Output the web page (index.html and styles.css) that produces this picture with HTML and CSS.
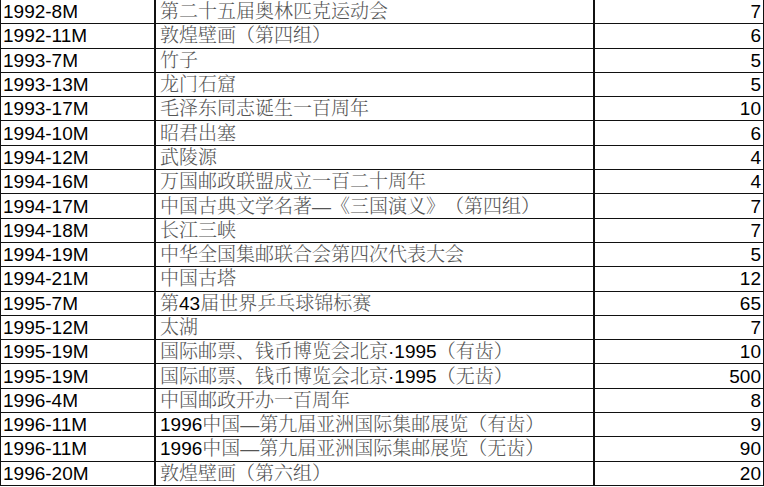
FILE: index.html
```html
<!DOCTYPE html>
<html lang="zh">
<head>
<meta charset="utf-8">
<title>邮票目录</title>
<link rel="stylesheet" href="styles.css">
</head>
<body>
<div class="sheet">
  <div class="c id">1992-8M</div><div class="c nm">第二十五届奥林匹克运动会</div><div class="c qt">7</div>
  <div class="c id">1992-11M</div><div class="c nm">敦煌壁画（第四组）</div><div class="c qt">6</div>
  <div class="c id">1993-7M</div><div class="c nm">竹子</div><div class="c qt">5</div>
  <div class="c id">1993-13M</div><div class="c nm">龙门石窟</div><div class="c qt">5</div>
  <div class="c id">1993-17M</div><div class="c nm">毛泽东同志诞生一百周年</div><div class="c qt">10</div>
  <div class="c id">1994-10M</div><div class="c nm">昭君出塞</div><div class="c qt">6</div>
  <div class="c id">1994-12M</div><div class="c nm">武陵源</div><div class="c qt">4</div>
  <div class="c id">1994-16M</div><div class="c nm">万国邮政联盟成立一百二十周年</div><div class="c qt">4</div>
  <div class="c id">1994-17M</div><div class="c nm">中国古典文学名著—《三国演义》（第四组）</div><div class="c qt">7</div>
  <div class="c id">1994-18M</div><div class="c nm">长江三峡</div><div class="c qt">7</div>
  <div class="c id">1994-19M</div><div class="c nm">中华全国集邮联合会第四次代表大会</div><div class="c qt">5</div>
  <div class="c id">1994-21M</div><div class="c nm">中国古塔</div><div class="c qt">12</div>
  <div class="c id">1995-7M</div><div class="c nm">第<span class="lat">43</span>届世界乒乓球锦标赛</div><div class="c qt">65</div>
  <div class="c id">1995-12M</div><div class="c nm">太湖</div><div class="c qt">7</div>
  <div class="c id">1995-19M</div><div class="c nm">国际邮票、钱币博览会北京<span class="lat">·1995</span>（有齿）</div><div class="c qt">10</div>
  <div class="c id">1995-19M</div><div class="c nm">国际邮票、钱币博览会北京<span class="lat">·1995</span>（无齿）</div><div class="c qt">500</div>
  <div class="c id">1996-4M</div><div class="c nm">中国邮政开办一百周年</div><div class="c qt">8</div>
  <div class="c id">1996-11M</div><div class="c nm"><span class="lat">1996</span>中国—第九届亚洲国际集邮展览（有齿）</div><div class="c qt">9</div>
  <div class="c id">1996-11M</div><div class="c nm"><span class="lat">1996</span>中国—第九届亚洲国际集邮展览（无齿）</div><div class="c qt">90</div>
  <div class="c id">1996-20M</div><div class="c nm">敦煌壁画（第六组）</div><div class="c qt">20</div>
</div>
</body>
</html>
```
FILE: styles.css
```css
html, body {
  margin: 0;
  padding: 0;
  background: #fff;
}
.sheet {
  display: grid;
  grid-template-columns: 156px 439px 169px;
  grid-auto-rows: 24.3px;
  width: 764px;
  font-family: "Liberation Sans", "Noto Serif CJK SC", "Noto Sans CJK SC", sans-serif;
  font-size: 19px;
  color: #000;
}
.c {
  box-sizing: border-box;
  border-bottom: 1px solid #111;
  display: flex;
  align-items: center;
  white-space: nowrap;
  overflow: hidden;
  line-height: 1;
}
.id {
  border-left: 1px solid #111;
  border-right: 2px solid #111;
  padding-left: 2px;
}
.nm {
  border-right: 2px solid #111;
  padding-left: 4px;
  color: #555;
  font-weight: 300;
  text-spacing-trim: space-all;
}
.lat {
  color: #000;
}
.qt {
  border-right: 1px solid #111;
  justify-content: flex-end;
  padding-right: 2px;
}
```
